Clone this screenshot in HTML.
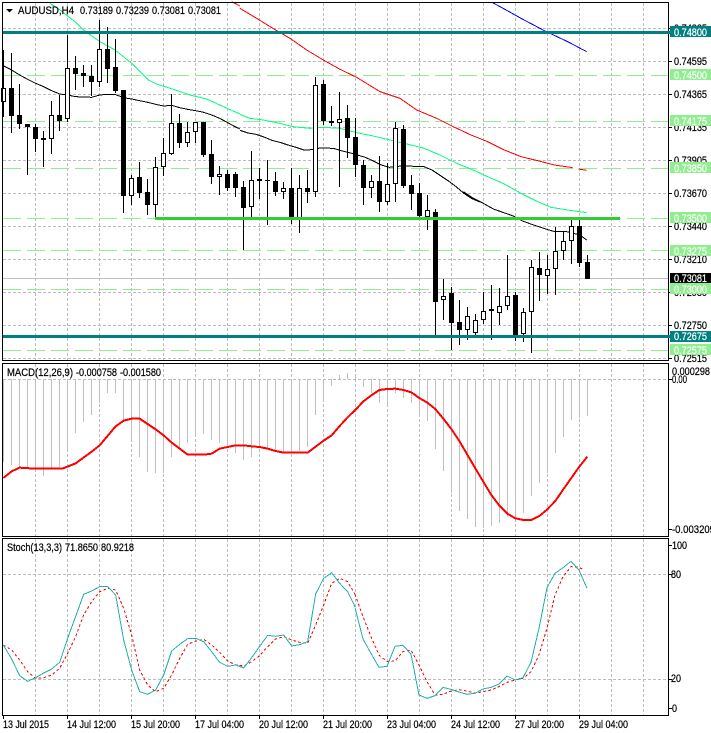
<!DOCTYPE html>
<html>
<head>
<meta charset="utf-8">
<style>
html,body{margin:0;padding:0;background:#fff;width:711px;height:733px;overflow:hidden}
svg{display:block}
text{font-family:"Liberation Sans",sans-serif;font-size:11px;fill:#000;stroke:#000;stroke-width:.22px}
text.w{fill:#fff;stroke:#fff}
</style>
</head>
<body>
<svg width="711" height="733" viewBox="0 0 711 733" xmlns="http://www.w3.org/2000/svg">
<rect width="711" height="733" fill="#fff"/>

<!-- grid main -->
<g stroke="#bcbcbc" stroke-width="1" stroke-dasharray="3 2" fill="none" shape-rendering="crispEdges">
<path d="M3 28.5H668M3 61.5H668M3 94.5H668M3 127.5H668M3 160.5H668M3 193.5H668M3 226.5H668M3 259.5H668M3 292.5H668M3 325.5H668M3 358.5H668"/>
<path d="M35.5 3V360M67.5 3V360M99.5 3V360M131.5 3V360M163.5 3V360M195.5 3V360M227.5 3V360M259.5 3V360M291.5 3V360M323.5 3V360M355.5 3V360M387.5 3V360M419.5 3V360M451.5 3V360M483.5 3V360M515.5 3V360M547.5 3V360M579.5 3V360M611.5 3V360M643.5 3V360"/>
<path d="M3 379.5H668M35.5 364V536M67.5 364V536M99.5 364V536M131.5 364V536M163.5 364V536M195.5 364V536M227.5 364V536M259.5 364V536M291.5 364V536M323.5 364V536M355.5 364V536M387.5 364V536M419.5 364V536M451.5 364V536M483.5 364V536M515.5 364V536M547.5 364V536M579.5 364V536M611.5 364V536M643.5 364V536"/>
<path d="M3 574.5H668M3 679.5H668M35.5 539V715M67.5 539V715M99.5 539V715M131.5 539V715M163.5 539V715M195.5 539V715M227.5 539V715M259.5 539V715M291.5 539V715M323.5 539V715M355.5 539V715M387.5 539V715M419.5 539V715M451.5 539V715M483.5 539V715M515.5 539V715M547.5 539V715M579.5 539V715M611.5 539V715M643.5 539V715"/>
</g>

<!-- price line -->
<path d="M3 278.5H668" stroke="#c0c0c0" stroke-width="1" shape-rendering="crispEdges"/>

<!-- pale green dashed levels -->
<g stroke="#90ee90" stroke-width="1" stroke-dasharray="18 6" fill="none" shape-rendering="crispEdges">
<path d="M3 75.5H668M3 121.5H668M3 168.5H668M3 218.5H668M3 250.5H668M3 289.5H668M3 350.5H668"/>
</g>

<!-- moving averages -->
<g fill="none" shape-rendering="crispEdges" stroke-width="3" stroke-linejoin="round">
<g transform="scale(.33333)" stroke="#000">
<polyline points="11,198 35,210 59,225 83,238 107,250 131,260 155,272 179,282 203,285 227,290 275,292 299,285 323,283 347,284 371,293 395,297 419,302 443,307 467,313 491,318 515,316 539,323 563,328 587,332 611,337 635,345 659,355 683,368 707,381 720,387"/>
</g>
<g transform="translate(240,0) scale(.33333)" stroke="#000">
<polyline points="0,391 24,399 48,403 72,411 96,421 120,427 144,435 168,442 192,450 216,449 240,444 280,445 304,452 328,458 352,465 376,472 400,483 424,495 448,502 472,499 496,498 552,500 576,510 600,526 624,542 648,560 672,580 696,596 720,606"/>
</g>
<g transform="translate(400,190) scale(.33333)" stroke="#000">
<polyline points="190,5 220,25 250,40 280,57 340,78 365,92 395,103 440,118 465,125 500,125 520,130 540,135 560,150"/>
</g>
<g transform="scale(.33333)" stroke="#00ff7f">
<polyline points="150,10 180,30 225,65 250,90 300,125 345,150 395,190 445,240 470,252 520,268 570,285 620,297 670,320 720,342"/>
</g>
<g transform="translate(240,0) scale(.33333)" stroke="#00ff7f">
<polyline points="0,343 30,355 70,360 120,370 160,380 210,385 250,382 300,385 350,398 400,408 450,420 500,432 550,444 600,465 650,490 693,507"/>
</g>
<g transform="translate(471,0) scale(.33333)" stroke="#00ff7f">
<polyline points="0,507 50,530 100,552 150,580 200,605 240,622 290,630 347,638"/>
</g>
<g transform="scale(.33333)" stroke="#ff0000">
<polyline points="695,5 720,18"/>
</g>
<g transform="translate(240,0) scale(.33333)" stroke="#ff0000">
<polyline points="0,25 50,55 110,92 150,115 200,150 250,180 300,208 350,232 420,275 480,295 530,330 590,355 640,380 693,405"/>
</g>
<g transform="translate(471,0) scale(.33333)" stroke="#ff0000">
<polyline points="0,405 50,425 100,450 150,470 200,482 250,495 305,503"/>
<polyline points="322,507 347,511"/>
</g>
<g transform="translate(471,0) scale(.33333)" stroke="#0000ff">
<polyline points="65,8 100,27 150,55 220,92 290,125 347,155"/>
</g>
</g>

<!-- candles -->
<path shape-rendering="crispEdges" stroke="#000" stroke-width="1" fill="none" d="M3.5 50V117M11.5 53V133M19.5 84V129M27.5 124V175M35.5 124V152M43.5 131V167M51.5 101V154M59.5 95V131M67.5 35V122M75.5 56V90M83.5 65V87M91.5 65V96M99.5 20V87M107.5 27V83M115.5 39V93M123.5 90V213M131.5 175V205M139.5 162V198M147.5 179V215M155.5 157V220M163.5 138V176M171.5 94V155M179.5 114V148M187.5 122V147M195.5 122V143M203.5 122V157M211.5 140V184M219.5 166V195M227.5 170V191M235.5 172V197M243.5 181V250M251.5 151V219M259.5 168V199M267.5 160V225M275.5 172V196M283.5 182V199M291.5 168V224M299.5 175V233M307.5 170V203M315.5 77V197M323.5 80V125M331.5 106V126M339.5 92V187M347.5 105V158M355.5 118V177M363.5 160V205M371.5 175V198M379.5 156V212M387.5 163V205M395.5 122V202M403.5 125V188M411.5 175V210M419.5 183V218M427.5 195V230M435.5 209V337M443.5 279V320M451.5 287V350M459.5 300V345M467.5 307V340M475.5 314V338M483.5 292V324M491.5 285V340M499.5 288V325M507.5 255V310M515.5 292V341M523.5 308V342M531.5 260V353M539.5 252V301M547.5 255V294M555.5 227V295M563.5 231V260M571.5 218V264M579.5 218V267M587.5 255V279"/>
<path shape-rendering="crispEdges" fill="#000" d="M9 88h5V116h-5zM17 115h5V124h-5zM25 124h5V127h-5zM33 127h5V139h-5zM41 138h5V140h-5zM57 115h5V121h-5zM73 68h5V74h-5zM81 73h5V76h-5zM89 76h5V82h-5zM105 49h5V69h-5zM113 67h5V91h-5zM121 90h5V196h-5zM137 177h5V193h-5zM145 192h5V205h-5zM177 123h5V143h-5zM201 122h5V155h-5zM209 154h5V177h-5zM225 174h5V188h-5zM233 174h5V188h-5zM241 187h5V208h-5zM257 179h5V181h-5zM265 180h5V181h-5zM273 181h5V192h-5zM289 188h5V218h-5zM305 188h5V192h-5zM321 84h5V121h-5zM329 121h5V123h-5zM345 118h5V138h-5zM353 137h5V165h-5zM361 165h5V188h-5zM377 181h5V202h-5zM401 129h5V186h-5zM409 185h5V194h-5zM417 193h5V216h-5zM433 212h5V302h-5zM449 293h5V323h-5zM457 322h5V330h-5zM513 295h5V336h-5zM537 268h5V275h-5zM577 226h5V263h-5zM585 262h5V279h-5z"/>
<path shape-rendering="crispEdges" fill="#fff" stroke="#000" stroke-width="1" d="M1.5 88.5h4V101.5h-4zM49.5 115.5h4V138.5h-4zM65.5 68.5h4V118.5h-4zM97.5 49.5h4V81.5h-4zM129.5 178.5h4V195.5h-4zM153.5 167.5h4V204.5h-4zM161.5 153.5h4V166.5h-4zM169.5 123.5h4V153.5h-4zM185.5 132.5h4V142.5h-4zM193.5 122.5h4V131.5h-4zM217.5 174.5h4V176.5h-4zM249.5 180.5h4V206.5h-4zM281.5 188.5h4V191.5h-4zM297.5 188.5h4V217.5h-4zM313.5 85.5h4V191.5h-4zM337.5 119.5h4V122.5h-4zM369.5 181.5h4V187.5h-4zM385.5 184.5h4V201.5h-4zM393.5 128.5h4V183.5h-4zM425.5 210.5h4V216.5h-4zM441.5 296.5h4V299.5h-4zM465.5 316.5h4V329.5h-4zM473.5 320.5h4V332.5h-4zM481.5 311.5h4V319.5h-4zM489.5 309.5h4V310.5h-4zM497.5 306.5h4V312.5h-4zM505.5 296.5h4V305.5h-4zM521.5 312.5h4V333.5h-4zM529.5 267.5h4V311.5h-4zM545.5 269.5h4V275.5h-4zM553.5 251.5h4V268.5h-4zM561.5 241.5h4V250.5h-4zM569.5 226.5h4V240.5h-4z"/>

<!-- thick levels -->
<g shape-rendering="crispEdges">
<rect x="3" y="31" width="665" height="3" fill="#008080"/>
<rect x="3" y="335" width="665" height="3" fill="#008080"/>
<rect x="155" y="217" width="465" height="3" fill="#32cd32"/>
</g>

<!-- MACD histogram -->
<path shape-rendering="crispEdges" stroke="#c0c0c0" stroke-width="1" fill="none" d="M3.5 379V462M11.5 379V465M19.5 379V467M27.5 379V467M35.5 379V468M43.5 379V476M51.5 379V468M59.5 379V467M67.5 379V449M75.5 379V433M83.5 379V422M91.5 379V415M99.5 379V403M107.5 379V393M115.5 379V393M123.5 379V420M131.5 379V440M139.5 379V457M147.5 379V472M155.5 379V473M163.5 379V473M171.5 379V457M179.5 379V448M187.5 379V443M195.5 379V437M203.5 379V434M211.5 379V440M219.5 379V443M227.5 379V447M235.5 379V453M243.5 379V460M251.5 379V457M259.5 379V447M267.5 379V448M275.5 379V450M283.5 379V452M291.5 379V453M299.5 379V451M307.5 379V447M315.5 379V415M323.5 379V402M331.5 379V386M339.5 379V375M347.5 379V373M355.5 379V376M363.5 379V387M371.5 379V393M379.5 379V403M387.5 379V407M395.5 379V393M403.5 379V398M411.5 379V403M419.5 379V415M427.5 379V421M435.5 379V449M443.5 379V471M451.5 379V493M459.5 379V511M467.5 379V519M475.5 379V527M483.5 379V528M491.5 379V526M499.5 379V523M507.5 379V517M515.5 379V518M523.5 379V513M531.5 379V496M539.5 379V483M547.5 379V473M555.5 379V453M563.5 379V437M571.5 379V420M579.5 379V418M587.5 379V416"/>

<!-- MACD signal -->
<g fill="none" stroke="#ff0000" stroke-width="6" stroke-linejoin="round" shape-rendering="crispEdges">
<g transform="translate(0,360) scale(.33333)">
<polyline points="10,354 35,334 59,323 107,326 187,326 227,310 275,275 299,256 347,199 371,182 395,176 419,176 443,192 467,208 491,226 515,248 539,266 563,284 611,284 635,281 659,266 683,261 707,256 731,256 755,259 779,261 803,266 827,273 851,278 923,278 947,260 971,242 995,226 1019,198 1043,172 1050,165"/>
</g>
<g transform="translate(350,360) scale(.33333)">
<polyline points="0,165 16,150 40,124 64,106 88,90 112,87 136,86 160,90 184,97 208,114 232,128 256,147 280,176 304,207 328,243 352,284 376,325 400,365 424,405 448,437 472,461 496,475 520,480 544,480 568,468 592,448 616,423 640,388 664,354 688,320 712,290"/>
</g>
</g>

<!-- Stochastic -->
<g fill="none" stroke-width="3" stroke-linejoin="round" shape-rendering="crispEdges">
<g transform="translate(0,535) scale(.33333)" stroke="#ff0000" stroke-dasharray="8 7">
<polyline points="10,330 35,345 59,375 83,410 107,430 131,428 155,420 179,400 203,355 227,305 251,240 275,200 299,170 323,160 347,165 371,220 395,300 419,405 443,450 467,470 491,460 515,420 539,370 563,328 587,318 611,313 635,330 659,352 683,378 707,390 731,393 755,380 779,362 803,335 827,312 851,305 875,315 899,322 923,325 947,270 971,210 995,145 1019,130 1043,140 1065,178"/>
</g>
<g transform="translate(355,535) scale(.33333)" stroke="#ff0000" stroke-dasharray="8 7">
<polyline points="0,178 24,245 48,305 72,360 96,380 120,378 144,350 168,345 192,390 216,440 240,480 264,478 288,468 312,464 336,468 360,475 384,470 408,465 432,455 456,442 480,435 504,430 528,410 552,360 576,280 600,180 624,125 648,95 672,97 684,103"/>
</g>
<g transform="translate(0,535) scale(.33333)" stroke="#20b2aa">
<polyline points="10,330 35,372 59,422 83,439 107,428 131,414 155,402 179,382 203,310 227,244 251,178 275,168 299,155 323,155 347,180 371,315 395,405 419,470 443,478 467,465 491,420 515,348 539,328 563,311 587,310 611,320 635,350 659,382 683,394 707,390 731,399 755,368 779,334 803,301 827,304 851,300 875,333 899,329 923,320 947,177 971,130 995,113 1019,145 1043,170 1065,215"/>
</g>
<g transform="translate(355,535) scale(.33333)" stroke="#20b2aa">
<polyline points="0,218 24,312 48,355 72,397 96,394 120,334 144,331 168,357 192,480 216,490 240,482 264,457 288,463 312,471 336,478 360,475 384,462 408,457 432,447 456,423 480,435 504,428 528,382 552,280 576,158 600,115 624,98 648,79 672,105 696,160"/>
</g>
</g>

<!-- frames -->
<g fill="none" stroke="#000" stroke-width="1" shape-rendering="crispEdges">
<path d="M2.5 2.5H668.5V360.5H2.5Z"/>
<path d="M2.5 363.5H668.5V536.5H2.5Z"/>
<path d="M2.5 538.5H668.5V715.5H2.5Z"/>
<path d="M3.5 716V719M67.5 716V719M131.5 716V719M195.5 716V719M259.5 716V719M323.5 716V719M387.5 716V719M451.5 716V719M515.5 716V719M579.5 716V719"/>
<path d="M669 28.5H672M669 61.5H672M669 94.5H672M669 127.5H672M669 160.5H672M669 193.5H672M669 226.5H672M669 259.5H672M669 292.5H672M669 325.5H672M669 358.5H672M669 379.5H672M669 529.5H672M669 545.5H672M669 574.5H672M669 679.5H672M669 708.5H672"/>
</g>

<!-- legend -->
<polygon points="6,9 13,9 9.5,12.5" fill="#000"/>
<text x="18" y="14" textLength="56" lengthAdjust="spacingAndGlyphs">AUDUSD,H4</text>
<text x="80" y="14" textLength="33" lengthAdjust="spacingAndGlyphs">0.73189</text>
<text x="116" y="14" textLength="33" lengthAdjust="spacingAndGlyphs">0.73239</text>
<text x="152" y="14" textLength="33" lengthAdjust="spacingAndGlyphs">0.73081</text>
<text x="188" y="14" textLength="33" lengthAdjust="spacingAndGlyphs">0.73081</text>
<text x="7" y="376" textLength="66" lengthAdjust="spacingAndGlyphs">MACD(12,26,9)</text>
<text x="76" y="376" textLength="41" lengthAdjust="spacingAndGlyphs">-0.000758</text>
<text x="120" y="376" textLength="41" lengthAdjust="spacingAndGlyphs">-0.001580</text>
<text x="7" y="551" textLength="55" lengthAdjust="spacingAndGlyphs">Stoch(13,3,3)</text>
<text x="65" y="551" textLength="33" lengthAdjust="spacingAndGlyphs">71.8650</text>
<text x="101" y="551" textLength="33" lengthAdjust="spacingAndGlyphs">80.9218</text>

<!-- axis labels -->
<g>
<text x="674" y="32" textLength="33" lengthAdjust="spacingAndGlyphs">0.74825</text>
<text x="674" y="65" textLength="33" lengthAdjust="spacingAndGlyphs">0.74595</text>
<text x="674" y="98" textLength="33" lengthAdjust="spacingAndGlyphs">0.74365</text>
<text x="674" y="131" textLength="33" lengthAdjust="spacingAndGlyphs">0.74135</text>
<text x="674" y="164" textLength="33" lengthAdjust="spacingAndGlyphs">0.73905</text>
<text x="674" y="197" textLength="33" lengthAdjust="spacingAndGlyphs">0.73670</text>
<text x="674" y="230" textLength="33" lengthAdjust="spacingAndGlyphs">0.73440</text>
<text x="674" y="263" textLength="33" lengthAdjust="spacingAndGlyphs">0.73210</text>
<text x="674" y="296" textLength="33" lengthAdjust="spacingAndGlyphs">0.72980</text>
<text x="674" y="329" textLength="33" lengthAdjust="spacingAndGlyphs">0.72750</text>
<text x="674" y="362" textLength="33" lengthAdjust="spacingAndGlyphs">0.72515</text>
</g>
<g shape-rendering="crispEdges">
<rect x="670" y="26" width="41" height="11" fill="#008080"/>
<rect x="670" y="69" width="41" height="11" fill="#90ee90"/>
<rect x="670" y="115" width="41" height="11" fill="#90ee90"/>
<rect x="670" y="162" width="41" height="11" fill="#90ee90"/>
<rect x="670" y="212" width="41" height="11" fill="#90ee90"/>
<rect x="670" y="245" width="41" height="11" fill="#90ee90"/>
<rect x="670" y="273" width="41" height="11" fill="#000"/>
<rect x="670" y="283" width="41" height="11" fill="#90ee90"/>
<rect x="670" y="331" width="41" height="11" fill="#008080"/>
<rect x="670" y="344" width="41" height="11" fill="#90ee90"/>
<rect x="668" y="31" width="2" height="3" fill="#008080"/>
<rect x="668" y="335" width="2" height="3" fill="#008080"/>
</g>
<g>
<text class="w" x="674" y="36" textLength="33" lengthAdjust="spacingAndGlyphs">0.74800</text>
<text class="w" x="674" y="79" textLength="33" lengthAdjust="spacingAndGlyphs">0.74500</text>
<text class="w" x="674" y="125" textLength="33" lengthAdjust="spacingAndGlyphs">0.74175</text>
<text class="w" x="674" y="172" textLength="33" lengthAdjust="spacingAndGlyphs">0.73850</text>
<text class="w" x="674" y="222" textLength="33" lengthAdjust="spacingAndGlyphs">0.73500</text>
<text class="w" x="674" y="255" textLength="33" lengthAdjust="spacingAndGlyphs">0.73275</text>
<text class="w" x="674" y="282" textLength="33" lengthAdjust="spacingAndGlyphs">0.73081</text>
<text class="w" x="674" y="293" textLength="33" lengthAdjust="spacingAndGlyphs">0.73000</text>
<text class="w" x="674" y="340" textLength="33" lengthAdjust="spacingAndGlyphs">0.72675</text>
<text class="w" x="674" y="354" textLength="33" lengthAdjust="spacingAndGlyphs">0.72575</text>
</g>
<text x="672" y="375" textLength="38" lengthAdjust="spacingAndGlyphs">0.000298</text>
<text x="672" y="383" textLength="15" lengthAdjust="spacingAndGlyphs">0.00</text>
<text x="672" y="533" textLength="43" lengthAdjust="spacingAndGlyphs">-0.003209</text>
<text x="672" y="549" textLength="15" lengthAdjust="spacingAndGlyphs">100</text>
<text x="671" y="578" textLength="10" lengthAdjust="spacingAndGlyphs">80</text>
<text x="671" y="682" textLength="10" lengthAdjust="spacingAndGlyphs">20</text>
<text x="672" y="712" textLength="5" lengthAdjust="spacingAndGlyphs">0</text>

<!-- dates -->
<text x="3" y="728" textLength="46" lengthAdjust="spacingAndGlyphs">13 Jul 2015</text>
<text x="67" y="728" textLength="49" lengthAdjust="spacingAndGlyphs">14 Jul 12:00</text>
<text x="131" y="728" textLength="49" lengthAdjust="spacingAndGlyphs">15 Jul 20:00</text>
<text x="195" y="728" textLength="49" lengthAdjust="spacingAndGlyphs">17 Jul 04:00</text>
<text x="259" y="728" textLength="49" lengthAdjust="spacingAndGlyphs">20 Jul 12:00</text>
<text x="323" y="728" textLength="49" lengthAdjust="spacingAndGlyphs">21 Jul 20:00</text>
<text x="387" y="728" textLength="49" lengthAdjust="spacingAndGlyphs">23 Jul 04:00</text>
<text x="451" y="728" textLength="49" lengthAdjust="spacingAndGlyphs">24 Jul 12:00</text>
<text x="515" y="728" textLength="49" lengthAdjust="spacingAndGlyphs">27 Jul 20:00</text>
<text x="579" y="728" textLength="49" lengthAdjust="spacingAndGlyphs">29 Jul 04:00</text>
</svg>
</body>
</html>
